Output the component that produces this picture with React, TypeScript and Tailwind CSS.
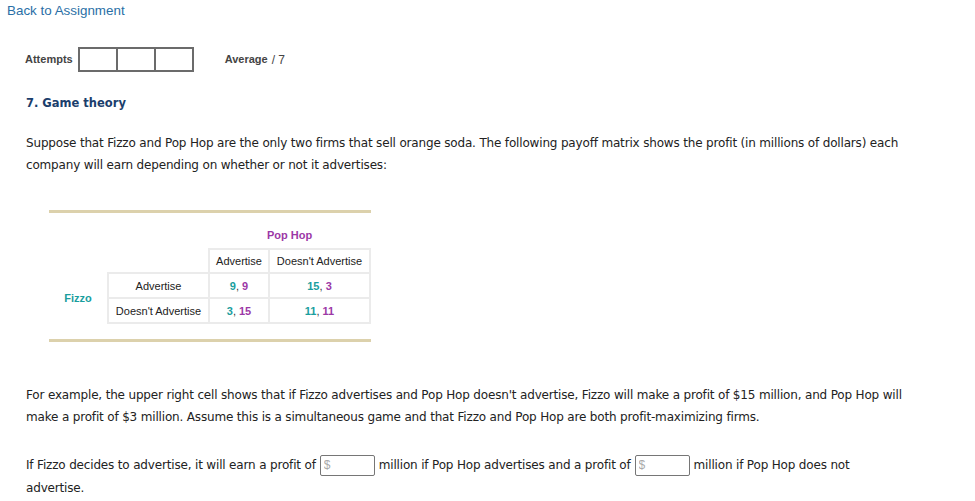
import React from 'react'

const body = { fontFamily: '"DejaVu Sans", Verdana, sans-serif' }
const arial = { fontFamily: '"Liberation Sans", Arial, sans-serif' }

function Payoff({ a, b }: { a: string; b: string }) {
  return (
    <span className="font-bold">
      <span className="text-[#1a9e9e]">{a}</span>
      <span className="font-normal text-[#333]">, </span>
      <span className="text-[#9c38a6]">{b}</span>
    </span>
  )
}

function DollarInput() {
  return (
    <input
      readOnly
      placeholder="$"
      className="mx-[4px] inline-block h-[21px] w-[55px] rounded-[2px] border border-[#767676] bg-white pl-[3px] align-middle text-[12px] tracking-normal placeholder:text-[#aaa]"
      style={arial}
    />
  )
}

function Matrix() {
  const cell = 'border-2 border-[#ebebeb] text-center'
  return (
    <div className="ml-[49px] w-[322px]" style={arial}>
      <div className="h-[3px] bg-[#dcd1ac]" />
      <table className="mt-[9px] border-collapse text-[11px] text-[#222]">
        <tbody>
          <tr className="h-[27px]">
            <td colSpan={2} />
            <td colSpan={2} className="text-center font-bold text-[#9c38a6]">Pop Hop</td>
          </tr>
          <tr className="h-[24px]">
            <td className="w-[59px]" />
            <td className="w-[101px] border-r-2 border-b-2 border-[#ebebeb]" />
            <td className={`${cell} w-[60px]`}>Advertise</td>
            <td className={`${cell} w-[101px]`}>Doesn't Advertise</td>
          </tr>
          <tr className="h-[25px]">
            <td rowSpan={2} className="text-center font-bold text-[#1a9e9e]">Fizzo</td>
            <td className={cell}>Advertise</td>
            <td className={cell}><Payoff a="9" b="9" /></td>
            <td className={cell}><Payoff a="15" b="3" /></td>
          </tr>
          <tr className="h-[25px]">
            <td className={cell}>Doesn't Advertise</td>
            <td className={cell}><Payoff a="3" b="15" /></td>
            <td className={cell}><Payoff a="11" b="11" /></td>
          </tr>
        </tbody>
      </table>
      <div className="mt-[15px] h-[3px] bg-[#dcd1ac]" />
    </div>
  )
}

export default function App() {
  return (
    <div className="min-h-[501px] w-[975px] bg-white text-[#222]">
      <div className="px-[7px] pt-[3px] text-[13.4px] leading-[16px] text-[#2a6fa6]" style={arial}>
        Back to Assignment
      </div>

      {/* attempts */}
      <div className="mt-[28px] flex items-center pl-[25px] text-[11px] text-[#444]" style={arial}>
        <span className="font-bold">Attempts</span>
        <div className="ml-[5px] flex">
          {[0, 1, 2].map((i) => (
            <div key={i} className="-ml-[2px] h-[25px] w-[40px] border-2 border-[#6b6b6b] first:ml-0" />
          ))}
        </div>
        <span className="ml-[31px] font-bold">Average</span>
        <span className="ml-[4px] text-[12px]">/ 7</span>
      </div>

      <div className="pl-[26px] pr-[73px] text-[12px] tracking-[-0.17px]" style={body}>
        <div className="mt-[23px] text-[11.5px] font-bold tracking-normal text-[#1b3e6c]">7. Game theory</div>

        <p className="mt-[20px] leading-[22px]">
          Suppose that Fizzo and Pop Hop are the only two firms that sell orange soda. The following payoff matrix shows the profit (in millions of dollars) each company will earn depending on whether or not it advertises:
        </p>
      </div>

      <div className="mt-[34px]">
        <Matrix />
      </div>

      <div className="pl-[26px] pr-[73px] text-[12px] tracking-[-0.17px]" style={body}>
        <p className="mt-[42px] leading-[22px]">
          For example, the upper right cell shows that if Fizzo advertises and Pop Hop doesn't advertise, Fizzo will make a profit of $15 million, and Pop Hop will make a profit of $3 million. Assume this is a simultaneous game and that Fizzo and Pop Hop are both profit-maximizing firms.
        </p>
        <p className="mt-[26px] leading-[23px]">
          If Fizzo decides to advertise, it will earn a profit of<DollarInput />million if Pop Hop advertises and a profit of<DollarInput />million if Pop Hop does not advertise.
        </p>
      </div>
    </div>
  )
}
